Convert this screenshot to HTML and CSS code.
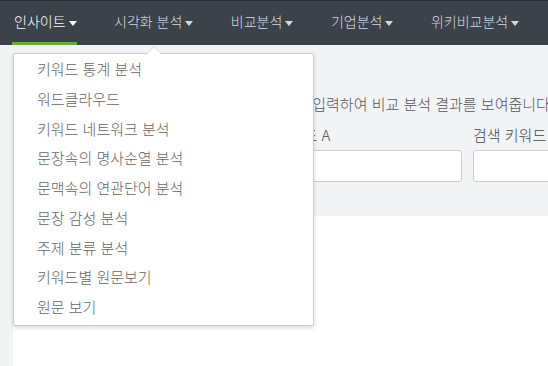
FILE: index.html
```html
<!DOCTYPE html>
<html lang="ko">
  <head>
    <meta charset="UTF-8" />
    <meta name="viewport" content="width=device-width, initial-scale=1.0" />
    <title>비교분석</title>
    <link rel="stylesheet" href="styles.css">
  </head>
  <body>
    <!-- 상단 메뉴 -->
    <nav class="topnav">
      <ul class="menu">
        <li class="menu-item active">인사이트<span class="caret"></span>
          <ul class="dropdown">
            <li>키워드 통계 분석</li>
            <li>워드클라우드</li>
            <li>키워드 네트워크 분석</li>
            <li>문장속의 명사순열 분석</li>
            <li>문맥속의 연관단어 분석</li>
            <li>문장 감성 분석</li>
            <li>주제 분류 분석</li>
            <li>키워드별 원문보기</li>
            <li>원문 보기</li>
          </ul>
        </li>
        <li class="menu-item">시각화 분석<span class="caret"></span></li>
        <li class="menu-item">비교분석<span class="caret"></span></li>
        <li class="menu-item">기업분석<span class="caret"></span></li>
        <li class="menu-item">위키비교분석<span class="caret"></span></li>
      </ul>
    </nav>

    <!-- 페이지 헤더 -->
    <section class="page-head">
      <h2 class="page-title">비교분석</h2>
      <p class="page-desc">검색 키워드 A와 검색 키워드 B를 입력하여 비교 분석 결과를 보여줍니다.</p>
      <div class="search-row">
        <div class="field">
          <label>분석 기간</label>
          <input type="text" />
        </div>
        <div class="field">
          <label>검색 키워드 A</label>
          <input type="text" />
        </div>
        <div class="field">
          <label>검색 키워드 B</label>
          <input type="text" />
        </div>
      </div>
    </section>

    <main class="page-body"></main>
  </body>
</html>
```

FILE: styles.css
```css
/* 기본 */
body {
  margin: 0;
  background-color: #f1f3f5;
  font-family: "Noto Sans CJK KR", "Noto Sans", sans-serif;
  font-size: 15px;
  font-weight: 300;
  color: #444;
}

ul {
  list-style: none;
  margin: 0;
  padding: 0;
}

/* 상단 메뉴 */
.topnav {
  background-color: #3b424a;
  border-top: 1px solid #2a2f34;
  height: 44px;
  position: relative;
  z-index: 10;
}

.menu {
  display: flex;
  gap: 35.5px;
  padding-left: 12px;
}

.menu-item {
  position: relative;
  padding: 0 0 0 2px;
  font-size: 14px;
  line-height: 41px;
  border-bottom: 3px solid transparent;
  color: #d5dae0;
  white-space: nowrap;
  cursor: pointer;
}

.menu-item.active {
  color: #fff;
  border-bottom-color: #6aaa37;
}

.caret {
  display: inline-block;
  width: 0;
  height: 0;
  margin-left: 3px;
  vertical-align: middle;
  border-top: 5px solid currentColor;
  border-left: 4px solid transparent;
  border-right: 4px solid transparent;
}

/* 드롭다운 메뉴 */
.dropdown {
  position: absolute;
  top: 52px;
  left: 1px;
  width: 299px;
  padding: 0 0 3px;
  background-color: #fff;
  border: 1px solid #c9cdd3;
  border-radius: 2px;
  box-shadow: 0 2px 4px rgba(0, 0, 0, 0.15);
  font-size: 15px;
  line-height: 29.75px;
  color: #666;
  cursor: default;
}

.dropdown::before,
.dropdown::after {
  content: "";
  position: absolute;
  width: 0;
  height: 0;
  border-left: 7px solid transparent;
  border-right: 7px solid transparent;
}

.dropdown::before {
  top: -8px;
  left: 133px;
  border-bottom: 8px solid #c9cdd3;
}

.dropdown::after {
  top: -7px;
  left: 133px;
  border-bottom: 7px solid #fff;
}

.dropdown li {
  padding-left: 23px;
}

/* 페이지 헤더 */
.page-head {
  padding: 13px 0 34px 25px;
  white-space: nowrap;
  overflow: hidden;
}

.page-title {
  margin: 0 0 10px;
  font-size: 18px;
  font-weight: normal;
  line-height: 26px;
}

.page-desc {
  margin: 0 0 11px 78px;
  line-height: 20px;
  color: #555;
}

.search-row {
  display: grid;
  grid-template-columns: 208px 218px 218px;
  gap: 11px;
}

.field label {
  display: block;
  line-height: 20px;
  margin-bottom: 5px;
  color: #444;
}

.field input {
  display: block;
  box-sizing: border-box;
  width: 100%;
  height: 32px;
  border: 1px solid #c9ced6;
  border-radius: 3px;
  background-color: #fff;
}

/* 본문 */
.page-body {
  margin-left: 13px;
  height: 150px;
  background-color: #fff;
}
```
